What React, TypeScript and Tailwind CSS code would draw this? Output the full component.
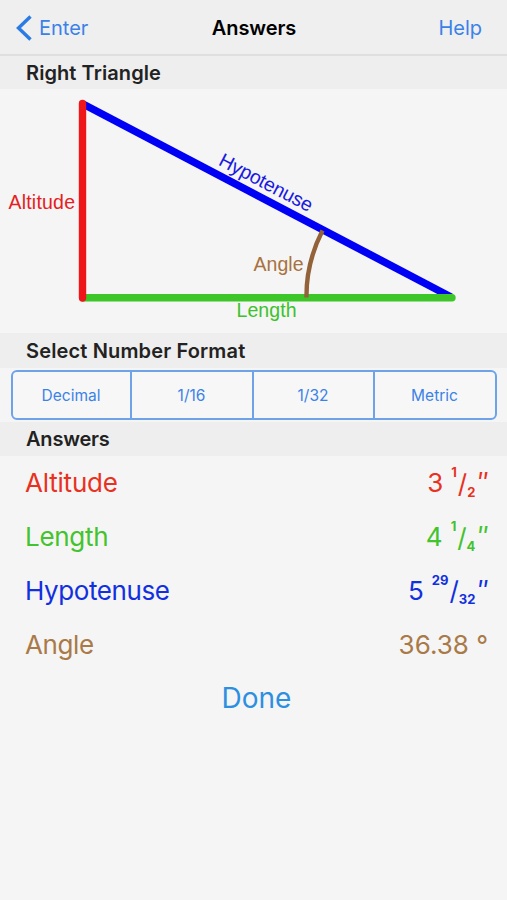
import { clsx } from 'clsx';

const formats = [
  { label: 'Decimal', width: 'w-[119px]' },
  { label: '1/16', width: 'w-[122px]' },
  { label: '1/32', width: 'w-[121px]' },
  { label: 'Metric', width: 'flex-1' },
];

interface Measurement {
  label: string;
  whole: string;
  fraction?: [string, string];
  color: string;
  tracking: string;
}

const answers: Measurement[] = [
  { label: 'Altitude', whole: '3', fraction: ['1', '2'], color: 'text-[#e8311f]', tracking: 'tracking-[-0.2px]' },
  { label: 'Length', whole: '4', fraction: ['1', '4'], color: 'text-[#43c32d]', tracking: 'tracking-[-0.3px]' },
  { label: 'Hypotenuse', whole: '5', fraction: ['29', '32'], color: 'text-[#1230e0]', tracking: 'tracking-[-0.4px]' },
  { label: 'Angle', whole: '36.38 °', color: 'text-[#a97a48]', tracking: 'tracking-[-0.4px]' },
];

function SectionHeader({ title, className }: { title: string; className: string }) {
  return (
    <h2 className={clsx('flex items-center bg-[#eeeeee] pl-[26px] text-[20px] font-semibold text-[#222222]', className)}>
      {title}
    </h2>
  );
}

function TriangleDiagram() {
  return (
    <svg width="507" height="244" viewBox="0 89 507 244" className="block" fontFamily="'Liberation Sans', Arial, sans-serif" fontSize="19.5">
      <line x1="83" y1="104" x2="451" y2="297" stroke="#0000f5" strokeWidth="7.5" />
      <line x1="83" y1="297.7" x2="452" y2="297.7" stroke="#3cc628" strokeWidth="7.4" strokeLinecap="round" />
      <line x1="82.5" y1="103.5" x2="82.5" y2="298" stroke="#ee1618" strokeWidth="7.4" strokeLinecap="round" />
      <path d="M322.5 230.5 Q306 263 306.5 297.5" fill="none" stroke="#936239" strokeWidth="4.4" />
      <text x="8.5" y="208.5" textLength="66.5" fill="#e6201f">Altitude</text>
      <text x="253.5" y="270.5" textLength="50" fill="#a87240">Angle</text>
      <text x="236.5" y="317" textLength="60" fill="#3cc22c">Length</text>
      <text transform="translate(217.5 164.5) rotate(27.7)" textLength="103" fill="#1a1ae0">Hypotenuse</text>
    </svg>
  );
}

function AnswerRow({ label, whole, fraction, color, tracking }: Measurement) {
  return (
    <div className={clsx('flex h-[53.8px] items-center justify-between pr-[19px] pl-[25px] text-[26px]', color)}>
      <span className={tracking}>{label}</span>
      {fraction ? (
        <span className="flex items-center">
          <span className="mr-[8px]">{whole}</span>
          <span className="mb-[20px] text-[13px] leading-none font-bold">{fraction[0]}</span>
          <span className="mt-px ml-px">/</span>
          <span className="mt-[19px] text-[13px] leading-none font-bold">{fraction[1]}</span>
          <span className="mr-[2px] text-[25px] tracking-[-2.2px] italic">''</span>
        </span>
      ) : (
        <span>{whole}</span>
      )}
    </div>
  );
}

export default function App() {
  return (
    <div className="h-[900px] w-[507px] overflow-hidden bg-[#f5f5f5] font-['Inter',sans-serif]">
      <header className="grid h-14 grid-cols-3 items-center border-b-2 border-[#dfdfdf] bg-[#efefef] pt-[2px] text-[20px] text-[#3b82e8]">
        <button type="button" className="flex items-center pl-4">
          <svg width="16" height="26" viewBox="0 0 16 26" fill="none" stroke="#2b7be4" strokeWidth="3.4" className="mr-[7px]">
            <path d="M14.5 1.5 L2.5 13 L14.5 24.5" />
          </svg>
          Enter
        </button>
        <h1 className="pl-px text-center font-semibold tracking-[-0.1px] text-black">Answers</h1>
        <button type="button" className="pr-[25px] text-right">Help</button>
      </header>

      <SectionHeader title="Right Triangle" className="h-[33px] tracking-[0.08px]" />
      <TriangleDiagram />

      <SectionHeader title="Select Number Format" className="h-[35px] pt-px tracking-[0.15px]" />
      <div className="px-[10.5px] py-[2px]">
        <div className="flex h-[50px] divide-x-2 divide-[#6ea3ea] rounded-[6px] border-2 border-[#6ea3ea] bg-[#f7f7f7]">
          {formats.map(({ label, width }) => (
            <button key={label} type="button" className={clsx('pt-[2px] text-[15.5px] text-[#3b82e8]', width)}>
              {label}
            </button>
          ))}
        </div>
      </div>

      <SectionHeader title="Answers" className="h-[34px] tracking-[-0.2px]" />
      {answers.map((answer) => (
        <AnswerRow key={answer.label} {...answer} />
      ))}
      <button type="button" className="block h-[54px] w-full pl-[6px] text-center text-[28px] text-[#2d8fe0]">
        Done
      </button>
    </div>
  );
}
